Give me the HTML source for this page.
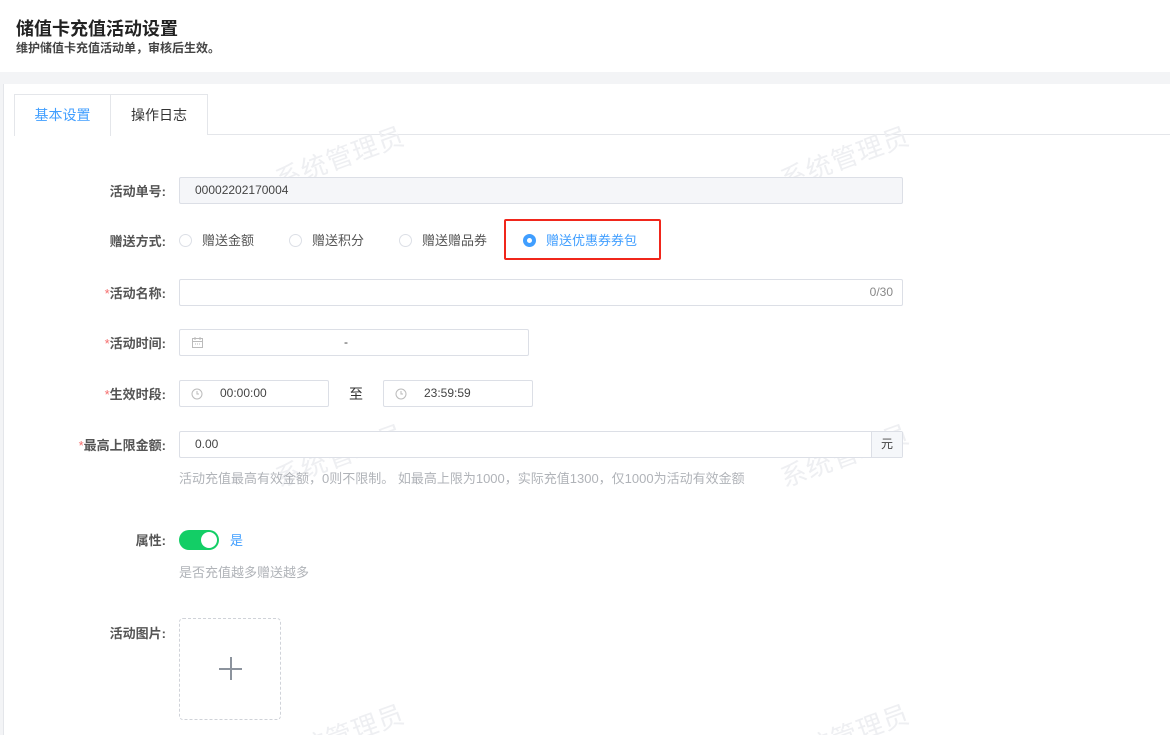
<!DOCTYPE html>
<html><head><meta charset="utf-8"><style>
*{box-sizing:border-box;margin:0;padding:0}
html,body{width:1170px;height:735px;overflow:hidden}
body{background:#f3f4f6;font-family:"Liberation Sans","Noto Sans CJK SC",sans-serif;color:#333}
#root{position:relative;width:1170px;height:735px;overflow:hidden}
.head{position:absolute;left:0;top:0;width:1170px;height:72px;background:#fff}
.head h1{position:absolute;left:16px;top:15px;font-size:18px;font-weight:bold;color:#222}
.head p{position:absolute;left:16px;top:39px;font-size:12px;color:#444;font-weight:bold}
.panel{position:absolute;left:3px;top:84px;width:1167px;height:651px;background:#fff;border-left:1px solid #e4e6ea}
.tabs{position:absolute;left:10px;top:10px;right:0;height:41px;border-bottom:1px solid #e4e6ea}
.tab{position:absolute;top:0;height:41px;border:1px solid #e4e6ea;border-bottom:none;font-size:14px;line-height:40px;text-align:center;background:#fff}
.lab{position:absolute;width:166px;text-align:right;font-size:13px;color:#555;font-weight:bold}
.lab i{color:#f56c6c;font-style:normal;font-weight:normal}
.inp{position:absolute;height:27px;border:1px solid #dcdfe6;border-radius:2px;background:#fff;font-size:12px;line-height:25px;color:#444}
.wm{position:absolute;font-size:26px;color:#eeeff2;transform:rotate(-20deg);white-space:nowrap;letter-spacing:1px}
.radio{position:absolute;top:230px;font-size:13px;color:#555}
.radio b{display:inline-block;width:13px;height:13px;border:1px solid #dcdfe6;border-radius:50%;vertical-align:-2px;margin-right:10px}
.help{position:absolute;left:179px;font-size:13px;color:#b0b3b8}
</style></head><body><div id="root">
<div class="head"><h1>储值卡充值活动设置</h1><p>维护储值卡充值活动单，审核后生效。</p></div>
<div class="panel">
<div class="tabs">
<div class="tab" style="left:0;width:97px;color:#409eff;height:42px">基本设置</div>
<div class="tab" style="left:96px;width:98px;color:#333">操作日志</div>
</div>
</div>
<div class="wm" style="left:272px;top:138px">系统管理员</div>
<div class="wm" style="left:777px;top:138px">系统管理员</div>
<div class="wm" style="left:272px;top:436px">系统管理员</div>
<div class="wm" style="left:777px;top:436px">系统管理员</div>
<div class="wm" style="left:272px;top:716px">系统管理员</div>
<div class="wm" style="left:777px;top:716px">系统管理员</div>

<div class="lab" style="top:181px">活动单号:</div>
<div class="inp" style="left:179px;top:177px;width:724px;background:#f5f6f9;padding-left:15px">00002202170004</div>

<div class="lab" style="top:231px">赠送方式:</div>
<div class="radio" style="left:179px"><b></b>赠送金额</div>
<div class="radio" style="left:289px"><b></b>赠送积分</div>
<div class="radio" style="left:399px"><b></b>赠送赠品券</div>
<div class="radio" style="left:523px;color:#409eff"><b style="border:4px solid #409eff"></b>赠送优惠券券包</div>
<div style="position:absolute;left:504px;top:219px;width:157px;height:41px;border:2px solid #f0261b;border-radius:2px"></div>

<div class="lab" style="top:283px"><i>*</i>活动名称:</div>
<div class="inp" style="left:179px;top:279px;width:724px;text-align:right;padding-right:9px;color:#888">0/30</div>

<div class="lab" style="top:333px"><i>*</i>活动时间:</div>
<div class="inp" style="left:179px;top:329px;width:350px"><svg style="position:absolute;left:11px;top:6px" width="13" height="13" viewBox="0 0 13 13" fill="none" stroke="#bbb"><rect x="1.5" y="2.5" width="10" height="9"/><path d="M1.5 5.5h10M4 1v3M9 1v3M4 8h1M6 8h1M8 8h1"/></svg><span style="position:absolute;left:164px">-</span></div>

<div class="lab" style="top:384px"><i>*</i>生效时段:</div>
<div class="inp" style="left:179px;top:380px;width:150px"><svg style="position:absolute;left:11px;top:7px" width="12" height="12" viewBox="0 0 12 12" fill="none" stroke="#bbb"><circle cx="6" cy="6" r="5"/><path d="M6 3v3h2"/></svg><span style="position:absolute;left:40px">00:00:00</span></div>
<div style="position:absolute;left:349px;top:384px;font-size:14px">至</div>
<div class="inp" style="left:383px;top:380px;width:150px"><svg style="position:absolute;left:11px;top:7px" width="12" height="12" viewBox="0 0 12 12" fill="none" stroke="#bbb"><circle cx="6" cy="6" r="5"/><path d="M6 3v3h2"/></svg><span style="position:absolute;left:40px">23:59:59</span></div>

<div class="lab" style="top:435px"><i>*</i>最高上限金额:</div>
<div class="inp" style="left:179px;top:431px;width:724px;padding-left:15px">0.00<span style="position:absolute;right:0;top:0;width:31px;height:25px;border-left:1px solid #dcdfe6;background:#f5f7fa;text-align:center">元</span></div>
<div class="help" style="top:468px">活动充值最高有效金额，0则不限制。 如最高上限为1000，实际充值1300，仅1000为活动有效金额</div>

<div class="lab" style="top:530px">属性:</div>
<div style="position:absolute;left:179px;top:530px;width:40px;height:20px;border-radius:10px;background:#13ce66"><div style="position:absolute;right:2px;top:2px;width:16px;height:16px;border-radius:50%;background:#fff"></div></div>
<div style="position:absolute;left:230px;top:530px;font-size:13px;color:#409eff">是</div>
<div class="help" style="top:562px">是否充值越多赠送越多</div>

<div class="lab" style="top:623px">活动图片:</div>
<div style="position:absolute;left:179px;top:618px;width:102px;height:102px;border:1px dashed #d0d3d9;border-radius:4px"><div style="position:absolute;left:39px;top:49px;width:23px;height:1.5px;background:#8c939d"></div><div style="position:absolute;left:50px;top:38px;width:1.5px;height:23px;background:#8c939d"></div></div>
</div></body></html>
